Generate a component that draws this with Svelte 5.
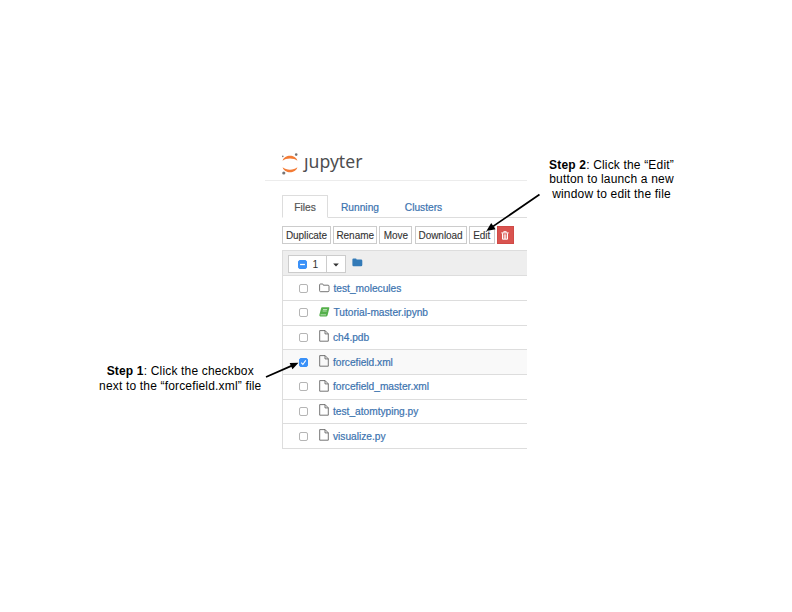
<script>
  const tabs = [
    { name: 'Files', w: 46 },
    { name: 'Running', w: 64 },
    { name: 'Clusters', w: 63 }
  ];
  const actions = [
    { name: 'Duplicate', w: 49 },
    { name: 'Rename', w: 44 },
    { name: 'Move', w: 33 },
    { name: 'Download', w: 52 },
    { name: 'Edit', w: 26 }
  ];
  const files = [
    { name: 'test_molecules', kind: 'folder' },
    { name: 'Tutorial-master.ipynb', kind: 'notebook' },
    { name: 'ch4.pdb', kind: 'file' },
    { name: 'forcefield.xml', kind: 'file', checked: true },
    { name: 'forcefield_master.xml', kind: 'file' },
    { name: 'test_atomtyping.py', kind: 'file' },
    { name: 'visualize.py', kind: 'file' }
  ];
</script>

<main class="figure">
  <section class="panel">
    <header class="brand">
      <svg class="logo" width="18" height="24" viewBox="0 0 18 24">
        <path d="M1.6 8.7C3.4 2 14.6 2 16.4 8.7C12.8 5.6 5.2 5.6 1.6 8.7Z" fill="#f37b35" />
        <path d="M1.6 15.3C3.4 22 14.6 22 16.4 15.3C12.8 18.4 5.2 18.4 1.6 15.3Z" fill="#f37b35" />
        <circle cx="15.2" cy="2.6" r="1.3" fill="#767677" />
        <circle cx="1.8" cy="4.4" r="0.8" fill="#767677" />
        <circle cx="2.8" cy="21" r="1.6" fill="#767677" />
      </svg>
      <span class="word"><span class="j">j</span>upyter</span>
    </header>

    <nav class="tabs">
      {#each tabs as tab, i}
        <a class:active={i === 0} style="width:{tab.w}px">{tab.name}</a>
      {/each}
    </nav>

    <div class="actions">
      {#each actions as a}
        <button style="width:{a.w}px">{a.name}</button>
      {/each}
      <button class="trash" aria-label="Delete">
        <svg width="8" height="9" viewBox="0 0 8 9">
          <path d="M0.3 1.9H7.7M2.7 1.5V0.7H5.3V1.5" fill="none" stroke="#fff" stroke-width="1" />
          <path d="M1.5 2.2V8.2H6.5V2.2M3.2 3.3V8M4.8 3.3V8" fill="none" stroke="#fff" stroke-width="1" />
        </svg>
      </button>
    </div>

    <div class="list">
      <div class="head">
        <div class="select">
          <span class="all"><span class="box minus"><svg width="10" height="10" viewBox="0 0 10 10"><path d="M2.3 5H7.7" stroke="#fff" stroke-width="1.4" /></svg></span>1</span>
          <span class="drop"><svg width="6" height="4" viewBox="0 0 7 4"><path d="M0.2 0.3H6.8L3.5 3.8Z" fill="#333" /></svg></span>
        </div>
        <svg class="home" width="11" height="9" viewBox="0 0 11 9"><path d="M0.4 1.6Q0.4 0.5 1.5 0.5H3.6Q4.6 0.5 4.6 1.6H9Q10.3 1.6 10.3 2.8V7Q10.3 8.2 9 8.2H1.6Q0.4 8.2 0.4 7Z" fill="#337ab7" /></svg>
      </div>
      {#each files as f}
        <div class="row" class:picked={f.checked}>
          <span class="box" class:on={f.checked}>
            {#if f.checked}
              <svg width="10" height="10" viewBox="0 0 10 10"><path d="M2.5 5.2L4.3 7.2L7.5 2.6" fill="none" stroke="#fff" stroke-width="1.2" /></svg>
            {/if}
          </span>
          <span class="icon">
            {#if f.kind === 'folder'}
              <svg width="11" height="10" viewBox="0 0 11 10"><path d="M0.6 1.9Q0.6 1 1.5 1H3.4Q4.3 1 4.3 2.2H9Q10 2.2 10 3.2V7.7Q10 8.7 9 8.7H1.6Q0.6 8.7 0.6 7.7Z" fill="none" stroke="#666" stroke-width="0.9" /></svg>
            {:else if f.kind === 'notebook'}
              <svg class="book" width="11" height="10" viewBox="0 0 11 10"><path d="M3 0.3H9.8Q10.5 0.5 10.3 1.3L8.6 8.3Q8.3 9.4 7.3 9.4H1.4Q0 9.2 0.4 7.7L2.1 1.2Q2.3 0.4 3 0.3Z" fill="#55b04b" /><path d="M4 2.5H8.1M3.6 4H7.7M1.5 7.8H7" fill="none" stroke="#e4f4e1" stroke-width="0.7" /></svg>
            {:else}
              <svg class="doc" width="11" height="12" viewBox="0 0 11 12"><path d="M0.7 0.6H6.1L9.3 3.8V11.2H0.7ZM6 0.6V3.9H9.3" fill="none" stroke="#666" stroke-width="0.9" /></svg>
            {/if}
          </span>
          <a class={f.kind}>{f.name}</a>
        </div>
      {/each}
    </div>
  </section>

  <p class="note one"><span><b>Step 1</b>: Click the checkbox</span><span>next to the “forcefield.xml” file</span></p>
  <p class="note two"><span><b>Step 2</b>: Click the “Edit”</span><span>button to launch a new</span><span>window to edit the file</span></p>
  <svg class="arrows" width="792" height="612" viewBox="0 0 792 612">
    <path d="M266 377L292 365.6M539.5 194.5L493 226.4" stroke="#000" stroke-width="1.7" />
    <path d="M298.5 362.7L289.6 362.9L292.5 369.2ZM486.4 231L491.2 223L495.6 229.3Z" />
  </svg>
</main>

<style>
  :global(body) { background: #fff; }
  .figure {
    position: relative;
    width: 792px;
    height: 612px;
    overflow: hidden;
    background: #fff;
    font-family: "Liberation Sans", Arial, sans-serif;
    box-sizing: border-box;
    padding: 150px 0 0 265px;
  }
  .figure :global(*) { box-sizing: border-box; }
  .panel { width: 262px; font-size: 10.2px; color: #333; }
  .brand {
    display: flex;
    height: 31px;
    padding-left: 16px;
    border-bottom: 1px solid #ececec;
  }
  .logo { margin-top: 2px; flex: none; }
  .word {
    margin-left: 5px;
    font: 17.6px/22px "Noto Sans", "Open Sans", sans-serif;
    color: #4e4e50;
    letter-spacing: 0;
  }
  .j { display: inline-block; clip-path: inset(7.5px -3px -3px -4px); }
  .tabs {
    display: flex;
    margin: 14px 0 0 17px;
    height: 23px;
    border-bottom: 1px solid #ddd;
  }
  .tabs a {
    height: 23px;
    line-height: 25px;
    text-align: center;
    color: #3b73af;
    -webkit-text-stroke: 0.2px;
  }
  .tabs .active {
    line-height: 23px;
    border: 1px solid #ddd;
    border-bottom-color: #fff;
    border-radius: 1px 1px 0 0;
    background: #fff;
    color: #555;
  }
  .actions { display: flex; gap: 2.2px; margin: 8px 0 0 17px; height: 18px; }
  button {
    flex: none;
    height: 18px;
    padding: 0;
    border: 1px solid #ccc;
    background: #fff;
    color: #333;
    font: 10px/15px "Liberation Sans", Arial, sans-serif;
    letter-spacing: -0.05px;
    text-align: center;
    white-space: nowrap;
    -webkit-text-stroke: 0.1px;
  }
  .trash {
    width: 17px;
    display: flex;
    align-items: center;
    justify-content: center;
    background: #d9534f;
    border-color: #d04a46;
  }
  .list {
    margin: 6px 0 0 17px;
    border: 1px solid #ddd;
    border-right: 0;
  }
  .head { display: flex; height: 24.2px; padding: 4px 0 0 5px; background: #eee; }
  .select { display: flex; width: 58px; height: 18px; border: 1px solid #ccc; background: #fff; }
  .all { display: flex; align-items: center; width: 38px; padding-left: 9px; gap: 5.5px; border-right: 1px solid #ccc; }
  .drop { flex: 1; display: flex; align-items: center; justify-content: center; padding-top: 1px; }
  .home { margin: 3px 0 0 6px; }
  .row {
    display: flex;
    align-items: center;
    height: 24.7px;
    padding-left: 16px;
    border-top: 1px solid #ddd;
  }
  .picked { background: #f9f9f9; }
  .box {
    display: block;
    flex: none;
    width: 9px;
    height: 9px;
    border: 1px solid #b5b5b5;
    border-radius: 2px;
    background: #fff;
  }
  .box svg { display: block; margin: -1px; width: 9px; height: 9px; }
  .on, .minus { background: #3a91f8; border-color: #3a91f8; }
  .icon { width: 11px; margin-left: 11px; display: flex; }
  .doc, .book { position: relative; top: -1px; }
  .row a {
    margin-left: 3px;
    color: #3b73af;
    white-space: nowrap;
    position: relative;
    top: 0.2px;
    letter-spacing: -0.01px;
    -webkit-text-stroke: 0.2px;
  }
  .row .folder, .row .notebook { margin-left: 3.5px; }
  .note {
    position: absolute;
    margin: 0;
    font-size: 12px;
    line-height: 14.5px;
    letter-spacing: 0.17px;
    text-align: center;
    color: #000;
    white-space: nowrap;
  }
  .note span { display: block; }
  .one { left: 80px; top: 364px; width: 200.5px; }
  .two { left: 511px; top: 157.5px; width: 201px; }
  .arrows { position: absolute; left: 0; top: 0; }
</style>
